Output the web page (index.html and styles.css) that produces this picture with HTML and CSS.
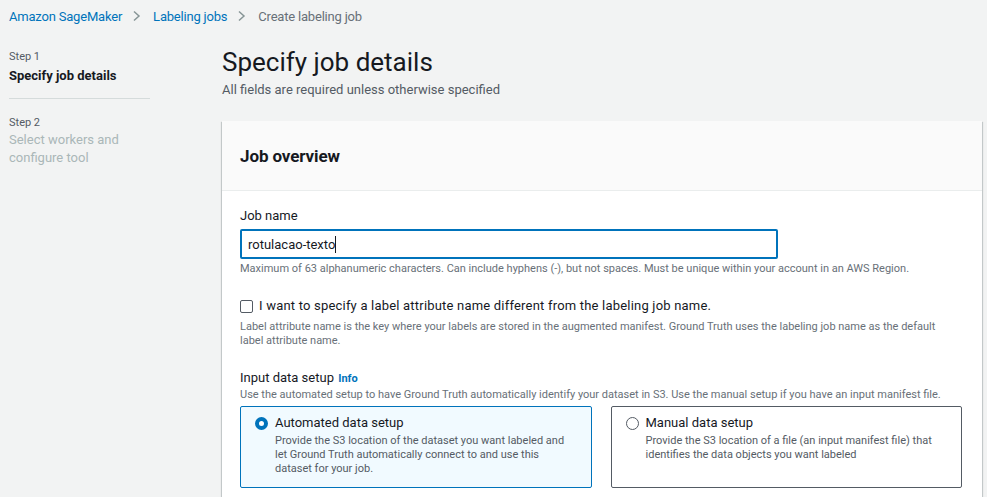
FILE: index.html
```html
<!DOCTYPE html>
<html>
<head>
<meta charset="utf-8">
<link rel="stylesheet" href="styles.css">
</head>
<body>
<nav class="crumbs">
  <a class="crumb-link">Amazon SageMaker</a>
  <svg class="chev" width="10" height="12" viewBox="0 0 10 12"><path d="M2 1.5 L7 6 L2 10.5" fill="none" stroke="#879596" stroke-width="1.5"/></svg>
  <a class="crumb-link">Labeling jobs</a>
  <svg class="chev" width="10" height="12" viewBox="0 0 10 12"><path d="M2 1.5 L7 6 L2 10.5" fill="none" stroke="#879596" stroke-width="1.5"/></svg>
  <span class="crumb-current">Create labeling job</span>
</nav>
<div class="layout">
  <aside class="steps">
    <div class="step active">
      <div class="step-num">Step 1</div>
      <div class="step-title">Specify job details</div>
    </div>
    <div class="step">
      <div class="step-num">Step 2</div>
      <div class="step-title">Select workers and configure tool</div>
    </div>
  </aside>
  <main class="main">
    <h1 class="page-title">Specify job details</h1>
    <p class="page-sub">All fields are required unless otherwise specified</p>
    <section class="card">
      <header class="card-head"><h2>Job overview</h2></header>
      <div class="card-body">
        <div class="field">
          <label class="field-label">Job name</label>
          <div class="input"><span>rotulacao-texto</span><span class="caret"></span></div>
          <p class="hint">Maximum of 63 alphanumeric characters. Can include hyphens (-), but not spaces. Must be unique within your account in an AWS Region.</p>
        </div>
        <div class="field check-field">
          <div class="check-row"><span class="checkbox"></span><span class="check-label">I want to specify a label attribute name different from the labeling job name.</span></div>
          <p class="hint check-hint">Label attribute name is the key where your labels are stored in the augmented manifest. Ground Truth uses the labeling job name as the default label attribute name.</p>
        </div>
        <div class="field setup">
          <div class="field-label">Input data setup <span class="info">Info</span></div>
          <p class="hint">Use the automated setup to have Ground Truth automatically identify your dataset in S3. Use the manual setup if you have an input manifest file.</p>
          <div class="tiles">
            <div class="tile selected">
              <span class="radio on"></span>
              <div>
                <div class="tile-title">Automated data setup</div>
                <div class="tile-desc">Provide the S3 location of the dataset you want labeled and let Ground Truth automatically connect to and use this dataset for your job.</div>
              </div>
            </div>
            <div class="tile">
              <span class="radio"></span>
              <div>
                <div class="tile-title">Manual data setup</div>
                <div class="tile-desc">Provide the S3 location of a file (an input manifest file) that identifies the data objects you want labeled</div>
              </div>
            </div>
          </div>
        </div>
      </div>
    </section>
  </main>
</div>
</body>
</html>
```
FILE: styles.css
```css
* { box-sizing: border-box; }
html, body { margin: 0; padding: 0; }
body {
  background: #f2f3f3;
  font-family: Roboto, "Liberation Sans", sans-serif;
  color: #16191f;
  font-size: 13px;
  overflow: hidden;
  height: 497px;
}
.crumbs {
  display: flex;
  align-items: center;
  height: 32px;
  padding: 0 0 0 9px;
  font-size: 13px;
  letter-spacing: -0.2px;
}
.crumb-link { color: #0073bb; }
.chev { margin: 0 11px 0 10px; }
.crumb-current { color: #687078; }
.layout { display: flex; }
.steps {
  width: 222px;
  padding: 17px 0 0 9px;
}
.step { width: 141px; }
.step.active {
  border-bottom: 1px solid #d5dbdb;
  padding-bottom: 13px;
  margin-bottom: 16px;
}
.step-num { font-size: 11px; color: #545b64; line-height: 16px; }
.step-title { font-size: 13px; line-height: 18px; margin-top: 2px; }
.step.active .step-title { font-weight: 700; }
.step:not(.active) .step-title { color: #aab7b8; margin-top: 0; }
.main { flex: 1; padding-right: 5px; }
.page-title {
  margin: 13px 0 0 0;
  font-size: 26px;
  font-weight: 400;
  line-height: 35px;
}
.page-sub {
  margin: 0;
  color: #545b64;
  font-size: 13px;
  line-height: 20px;
}
.card {
  margin-top: 21px;
  background: #fff;
  box-shadow: 0 1px 1px 0 rgba(0,28,36,.3), 1px 1px 1px 0 rgba(0,28,36,.15), -1px 1px 1px 0 rgba(0,28,36,.15);
}
.card-head {
  background: #fafafa;
  border-bottom: 1px solid #eaeded;
  height: 70px;
  display: flex;
  align-items: center;
  padding-left: 18px;
}
.card-head h2 { margin: 0; font-size: 17px; font-weight: 700; line-height: 22px; letter-spacing: -0.1px; }
.card-body { padding: 16px 18px 30px 18px; }
.field-label { display: block; font-size: 13px; line-height: 18px; color: #16191f; }
.input {
  margin-top: 4px;
  width: 538px;
  height: 30px;
  border: 2px solid #0073bb;
  border-radius: 2px;
  padding: 0 6px;
  display: flex;
  align-items: center;
  font-size: 13px;
  color: #16191f;
}
.caret { width: 1px; height: 17px; background: #16191f; }
.hint {
  margin: 3px 0 0 0;
  font-size: 11px;
  line-height: 14px;
  color: #687078;
}
.check-field { margin-top: 21px; }
.check-row { display: flex; align-items: center; }
.checkbox {
  width: 13px; height: 13px;
  border: 1px solid #545b64;
  border-radius: 2px;
  margin-right: 6px;
}
.check-label { font-size: 13px; line-height: 18px; letter-spacing: 0.2px; }
.check-hint { margin-top: 5px; max-width: 710px; }
.setup { margin-top: 21px; }
.info { color: #0073bb; font-weight: 700; font-size: 11px; margin-left: 1px; }
.setup .hint { margin-top: 0; }
.tiles {
  display: flex;
  gap: 19px;
  margin-top: 4px;
  width: 722px;
}
.tile {
  flex: 1;
  display: flex;
  align-items: flex-start;
  border: 1px solid #545b64;
  border-radius: 2px;
  height: 82px;
  padding: 7px 14px 8px 14px;
  background: #fff;
}
.tile.selected { background: #f1faff; border-color: #0073bb; }
.radio {
  flex: none;
  width: 13px; height: 13px;
  border-radius: 50%;
  border: 1px solid #545b64;
  margin: 3px 7px 0 0;
}
.radio.on { border: 4px solid #0073bb; background: #fff; }
.tile-title { font-size: 13px; line-height: 18px; }
.tile-desc { font-size: 11px; line-height: 14px; color: #545b64; margin-top: 2px; }
```
